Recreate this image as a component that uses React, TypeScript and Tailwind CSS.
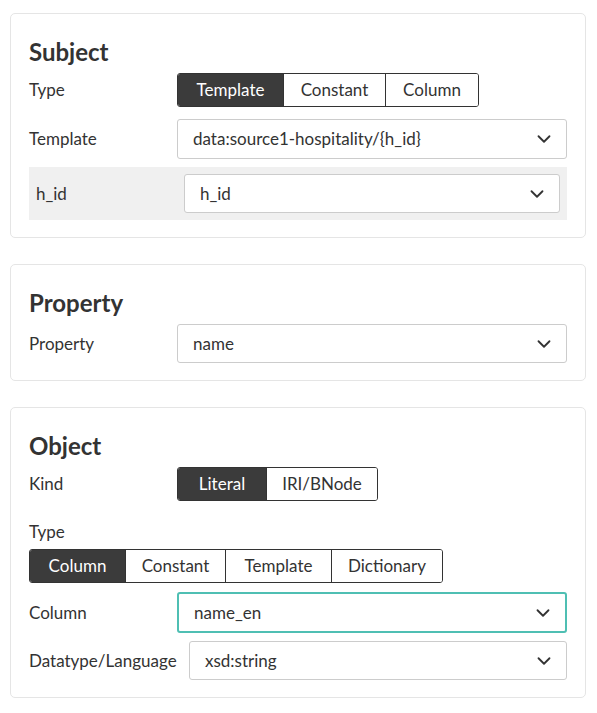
import { ChevronDown } from 'lucide-react';

interface ToggleOption {
  label: string;
  width: string;
}

function ToggleGroup({ options, active }: { options: ToggleOption[]; active: number }) {
  return (
    <div className="flex h-[34px] rounded-[3px] border border-[#333] overflow-hidden">
      {options.map((opt, i) => (
        <button
          key={opt.label}
          className={`${opt.width} flex items-center justify-center text-[17px] ${
            i > 0 ? 'border-l border-[#333]' : ''
          } ${i === active ? 'bg-[#3b3b3b] text-white' : 'bg-white text-[#333]'}`}
        >
          {opt.label}
        </button>
      ))}
    </div>
  );
}

function Select({ value, focused, height = 'h-[40px]' }: { value: string; focused?: boolean; height?: string }) {
  return (
    <div
      className={`flex-1 flex items-center justify-between bg-white rounded-[3px] pl-[15px] pr-[11px] text-[17px] text-[#333] ${
        focused ? 'h-[41px] border-2 border-[#4fbfb3]' : `${height} border border-[#ccc]`
      }`}
    >
      <span>{value}</span>
      <ChevronDown size={22} strokeWidth={2} className="text-[#333]" />
    </div>
  );
}

function Row({ label, children, className = '' }: { label: string; children: React.ReactNode; className?: string }) {
  return (
    <div className={`flex items-center ${className}`}>
      <div className="w-[148px] shrink-0 text-[17px] text-[#333]">{label}</div>
      {children}
    </div>
  );
}

function Card({ title, children }: { title: string; children: React.ReactNode }) {
  return (
    <div className="border border-[#e5e5e5] rounded-[5px] px-[18px] pt-[22px] pb-[17px] bg-white">
      <h2 className="text-[24px] leading-[32px] font-bold text-[#333] mb-[5px]">{title}</h2>
      {children}
    </div>
  );
}

export default function App() {
  return (
    <div
      className="min-h-screen bg-white pl-[10px] pr-[11px] pt-[13px] flex flex-col gap-[26px]"
      style={{ fontFamily: 'Lato, "Noto Sans", sans-serif' }}
    >
      <Card title="Subject">
        <Row label="Type">
          <ToggleGroup
            active={0}
            options={[
              { label: 'Template', width: 'w-[105px]' },
              { label: 'Constant', width: 'w-[102px]' },
              { label: 'Column', width: 'w-[93px]' },
            ]}
          />
        </Row>
        <Row label="Template" className="mt-[12px]">
          <Select value="data:source1-hospitality/{h_id}" />
        </Row>
        <Row label="h_id" className="mt-[8px] bg-[#f0f0f0] px-[7px] py-[7px]">
          <Select value="h_id" height="h-[39px]" />
        </Row>
      </Card>

      <Card title="Property">
        <Row label="Property" className="mt-[5px]">
          <Select value="name" height="h-[39px]" />
        </Row>
      </Card>

      <Card title="Object">
        <Row label="Kind">
          <ToggleGroup
            active={0}
            options={[
              { label: 'Literal', width: 'w-[88px]' },
              { label: 'IRI/BNode', width: 'w-[111px]' },
            ]}
          />
        </Row>
        <div className="mt-[19px] text-[17px] leading-[24px] text-[#333]">Type</div>
        <div className="mt-[5px] flex">
          <ToggleGroup
            active={0}
            options={[
              { label: 'Column', width: 'w-[95px]' },
              { label: 'Constant', width: 'w-[100px]' },
              { label: 'Template', width: 'w-[106px]' },
              { label: 'Dictionary', width: 'w-[111px]' },
            ]}
          />
        </div>
        <Row label="Column" className="mt-[9px]">
          <Select value="name_en" focused />
        </Row>
        <Row label="Datatype/Language" className="mt-[8px]">
          <div className="w-[12px] shrink-0" />
          <Select value="xsd:string" height="h-[39px]" />
        </Row>
      </Card>
    </div>
  );
}
